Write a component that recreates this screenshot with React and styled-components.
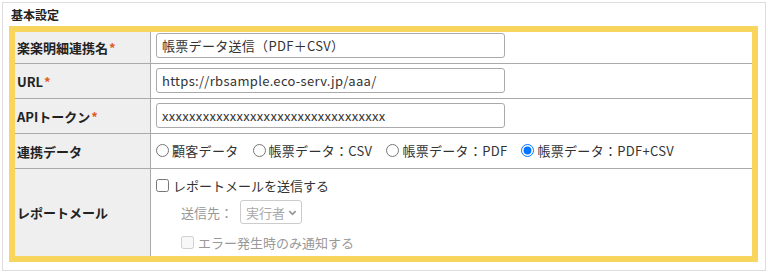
import React from "react";
import styled, { createGlobalStyle } from "styled-components";

const GlobalStyle = createGlobalStyle`
  body {
    margin: 0;
    font-family: "Noto Sans CJK JP", "Noto Sans", sans-serif;
    color: #333;
    background: #fff;
  }
`;

const Panel = styled.div`
  box-sizing: border-box;
  margin: 2px;
  width: 764px;
  height: 269px;
  border: 1px solid #ddd;
  padding: 0 7px 8px 6px;
`;

const Title = styled.div`
  height: 23px;
  line-height: 23px;
  padding-left: 2px;
  font-size: 12px;
  font-weight: bold;
  color: #222;
`;

const Frame = styled.div`
  border: 6px solid #f8d55c;
`;

const Row = styled.div`
  display: grid;
  grid-template-columns: 136px 1fr;
  border-top: ${(p) => (p.$first ? "none" : "1px solid #aaa")};
`;

const Label = styled.div`
  display: flex;
  align-items: center;
  background: #efefef;
  border-right: 1px solid #aaa;
  padding-left: 2px;
  font-size: 13px;
  font-weight: bold;
  color: #222;
`;

const Required = styled.span`
  color: #e05a1e;
  margin-left: 1px;
`;

const Cell = styled.div`
  padding: ${(p) => (p.$first ? "1px" : "4px")} 5px 5px 5px;
  display: flex;
  align-items: center;
  min-height: 25px;
`;

const TextInput = styled.input`
  box-sizing: border-box;
  width: 349px;
  height: 25px;
  border: 1px solid #aaa;
  border-radius: 3px;
  padding: 0 5px;
  font-family: inherit;
  font-size: 13px;
  letter-spacing: 0.3px;
  color: #333;
  outline: none;
`;

const RadioGroup = styled.div`
  display: flex;
  align-items: center;
  gap: 14px;
  letter-spacing: 0.3px;
`;

const Choice = styled.label`
  display: flex;
  align-items: center;
  gap: 3px;
  font-size: 13px;
  color: ${(p) => (p.$disabled ? "#999" : "#333")};
  white-space: nowrap;
`;

const Radio = styled.input.attrs({ type: "radio" })`
  margin: 0;
  width: 13px;
  height: 13px;
`;

const Check = styled.input.attrs({ type: "checkbox" })`
  margin: 0 1px 0 0;
  width: 13px;
  height: 13px;
`;

const Stack = styled.div`
  display: flex;
  flex-direction: column;
  padding: 5px 5px 3px;
`;

const Line = styled.div`
  display: flex;
  align-items: center;
  height: ${(p) => p.$h || 22}px;
  margin-top: ${(p) => p.$mt || 0}px;
  padding-left: ${(p) => (p.$indent ? 25 : 0)}px;
`;

const SubLabel = styled.span`
  font-size: 13px;
  color: #999;
  margin-right: 7px;
`;

const FakeSelect = styled.div`
  box-sizing: border-box;
  display: flex;
  align-items: center;
  gap: 3px;
  height: 24px;
  padding: 0 4px 0 5px;
  border: 1px solid #ccc;
  border-radius: 3px;
  font-size: 13px;
  color: #aaa;
`;

const Chevron = () => (
  <svg width="9" height="9" viewBox="0 0 10 10">
    <path d="M1.5 3.5 L5 7 L8.5 3.5" fill="none" stroke="#999" strokeWidth="2" />
  </svg>
);

const options = [
  "顧客データ",
  "帳票データ：CSV",
  "帳票データ：PDF",
  "帳票データ：PDF+CSV",
];

export default function App() {
  return (
    <>
      <GlobalStyle />
      <Panel>
        <Title>基本設定</Title>
        <Frame>
          <Row $first>
            <Label>
              楽楽明細連携名<Required>*</Required>
            </Label>
            <Cell $first>
              <TextInput defaultValue="帳票データ送信（PDF＋CSV）" />
            </Cell>
          </Row>
          <Row>
            <Label>
              URL<Required>*</Required>
            </Label>
            <Cell>
              <TextInput defaultValue="https://rbsample.eco-serv.jp/aaa/" />
            </Cell>
          </Row>
          <Row>
            <Label>
              APIトークン<Required>*</Required>
            </Label>
            <Cell>
              <TextInput defaultValue="xxxxxxxxxxxxxxxxxxxxxxxxxxxxxxxxx" />
            </Cell>
          </Row>
          <Row>
            <Label>連携データ</Label>
            <Cell>
              <RadioGroup>
                {options.map((o, i) => (
                  <Choice key={o}>
                    <Radio name="data" defaultChecked={i === 3} />
                    {o}
                  </Choice>
                ))}
              </RadioGroup>
            </Cell>
          </Row>
          <Row>
            <Label>レポートメール</Label>
            <Stack>
              <Line>
                <Choice>
                  <Check />
                  レポートメールを送信する
                </Choice>
              </Line>
              <Line $indent $mt={4} $h={24}>
                <SubLabel>送信先：</SubLabel>
                <FakeSelect>
                  実行者
                  <Chevron />
                </FakeSelect>
              </Line>
              <Line $indent $mt={7}>
                <Choice $disabled>
                  <Check disabled />
                  エラー発生時のみ通知する
                </Choice>
              </Line>
            </Stack>
          </Row>
        </Frame>
      </Panel>
    </>
  );
}
